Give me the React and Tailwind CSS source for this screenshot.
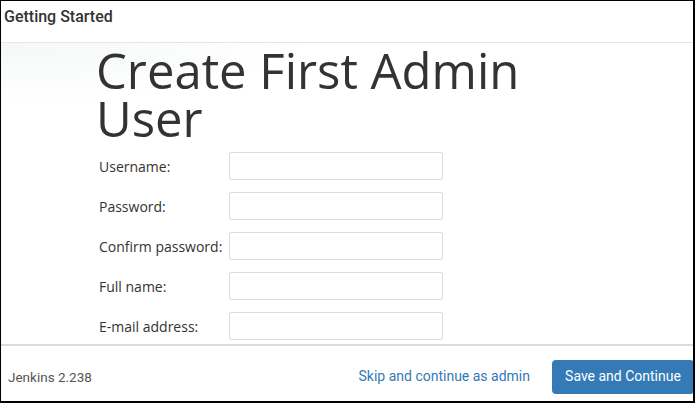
export default function App() {
  const fields = ["Username:", "Password:", "Confirm password:", "Full name:", "E-mail address:"];
  return (
    <div className="w-[695px] h-[403px] bg-white border-t border-l border-r-2 border-b-2 border-black flex flex-col overflow-hidden">
      <div className="h-[42px] shrink-0 border-b border-[#e6e6e6] flex items-start pt-[5px] pl-[3px]">
        <span className="text-[16px] leading-[22px] font-medium text-[#333] [font-family:Roboto,sans-serif]">Getting Started</span>
      </div>
      <div className="flex-1 overflow-hidden bg-[radial-gradient(ellipse_300px_60px_at_0%_0%,#f6f7f8_0%,#fafbfb_50%,#ffffff_100%)]">
        <div className="pl-[95px] pt-[1px] [font-family:'Open_Sans',sans-serif] text-[#333]">
          <h1 className="text-[49px] leading-[48px] font-normal m-0 pt-[2px]">Create First Admin<br />User</h1>
          <div className="mt-[10px] flex flex-col gap-[12px]">
            {fields.map((f) => (
              <div key={f} className="flex items-center h-[28px]">
                <label className="w-[133px] pl-[3px] text-[14px] text-[#333]">{f}</label>
                <div className="w-[214px] h-[28px] border border-[#dcdcdc] rounded-[2px] bg-white" />
              </div>
            ))}
          </div>
        </div>
      </div>
      <div className="h-[57px] shrink-0 border-t-2 border-[#dcdcdc] flex items-center [font-family:Roboto,sans-serif]">
        <span className="pl-[7px] pt-[7px] text-[13.5px] text-[#555]">Jenkins 2.238</span>
        <div className="ml-auto flex items-center pt-[6px]">
          <span className="text-[14px] text-[#337ab7] mr-[22px]">Skip and continue as admin</span>
          <div className="w-[142px] h-[34px] rounded-[4px] bg-[#337ab7] text-white text-[14px] flex items-center justify-center mr-[-1px]">Save and Continue</div>
        </div>
      </div>
    </div>
  );
}
